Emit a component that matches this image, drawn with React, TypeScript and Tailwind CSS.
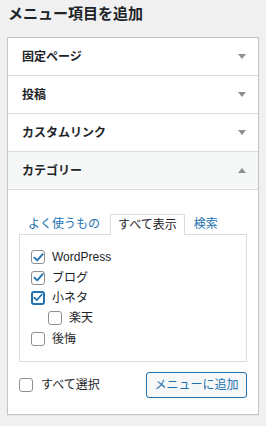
import { useState } from "react";

const font = {
  fontFamily:
    '"Liberation Sans", "Noto Sans CJK JP", "Noto Sans", sans-serif',
};

const Arrow = ({ up }: { up?: boolean }) => (
  <svg width="8" height="5" viewBox="0 0 8 5" className="text-[#8c8f94]">
    <path d={up ? "M0 5 L4 0 L8 5 Z" : "M0 0 L8 0 L4 5 Z"} fill="currentColor" />
  </svg>
);

const Box = ({
  checked,
  focus,
  onClick,
}: {
  checked: boolean;
  focus?: boolean;
  onClick?: () => void;
}) => (
  <span
    onClick={onClick}
    className={`w-[14px] h-[14px] shrink-0 rounded-[3px] bg-white flex items-center justify-center ${
      focus ? "border-2 border-[#2271b1]" : "border border-[#8c8f94]"
    }`}
  >
    {checked && (
      <svg width="11" height="11" viewBox="0 0 12 12">
        <path
          d="M1.5 6.2 L4.6 9.2 L10.6 2.4"
          fill="none"
          stroke="#2271b1"
          strokeWidth="2"
          strokeLinecap="round"
          strokeLinejoin="round"
        />
      </svg>
    )}
  </span>
);

const sections = ["固定ページ", "投稿", "カスタムリンク"];

export default function App() {
  const [items, setItems] = useState([
    { label: "WordPress", checked: true, indent: false },
    { label: "ブログ", checked: true, indent: false },
    { label: "小ネタ", checked: true, indent: false },
    { label: "楽天", checked: false, indent: true },
    { label: "後悔", checked: false, indent: false },
  ]);
  const [all, setAll] = useState(false);

  const toggle = (i: number) =>
    setItems(items.map((it, j) => (j === i ? { ...it, checked: !it.checked } : it)));

  return (
    <div className="w-[266px] h-[426px] bg-[#f0f0f1] text-[#1d2327] pt-[3px]" style={font}>
      <h2 className="px-[8px] text-[15px] font-bold leading-[22px] h-[34px]">
        メニュー項目を追加
      </h2>

      <div className="mx-[7px] bg-white border border-[#c3c4c7] shadow-[0_1px_1px_rgba(0,0,0,0.04)]">
        {sections.map((s) => (
          <div
            key={s}
            className="h-[38px] border-b border-[#dcdcde] flex items-center justify-between pl-[14px] pr-[12px]"
          >
            <span className="text-[12px] font-bold">{s}</span>
            <Arrow />
          </div>
        ))}

        {/* カテゴリー */}
        <div className="h-[38px] bg-[#f6f7f7] border-b border-[#dcdcde] flex items-center justify-between pl-[14px] pr-[12px]">
          <span className="text-[12px] font-bold">カテゴリー</span>
          <Arrow up />
        </div>

        <div className="px-[11px] pt-[23px] pb-[16px]">
          <div className="flex items-end text-[12px] h-[21px] pl-[9px]">
            <span className="text-[#2271b1] leading-[20px] mr-[10px]">よく使うもの</span>
            <span className="border border-b-0 border-[#dcdcde] bg-white px-[7px] leading-[20px] h-[21px] relative top-[1px]">
              すべて表示
            </span>
            <span className="text-[#2271b1] leading-[20px] ml-[9px]">検索</span>
          </div>

          <div className="border border-[#dcdcde] pt-[12px] pb-[6px] pl-[11px] h-[128px]">
            {items.map((it, i) => (
              <label
                key={it.label}
                className={`flex items-center h-[20.4px] gap-[7px] text-[12px] ${
                  it.indent ? "pl-[17px]" : ""
                }`}
              >
                <Box checked={it.checked} focus={i === 2} onClick={() => toggle(i)} />
                <span>{it.label}</span>
              </label>
            ))}
          </div>

          <div className="flex items-center justify-between mt-[10px]">
            <label className="flex items-center gap-[8px] text-[12px]">
              <Box checked={all} onClick={() => setAll(!all)} />
              <span>すべて選択</span>
            </label>
            <button className="w-[101px] h-[26px] border border-[#2271b1] rounded-[3px] bg-[#f6f7f7] text-[#2271b1] text-[12px]">
              メニューに追加
            </button>
          </div>
        </div>
      </div>
    </div>
  );
}
